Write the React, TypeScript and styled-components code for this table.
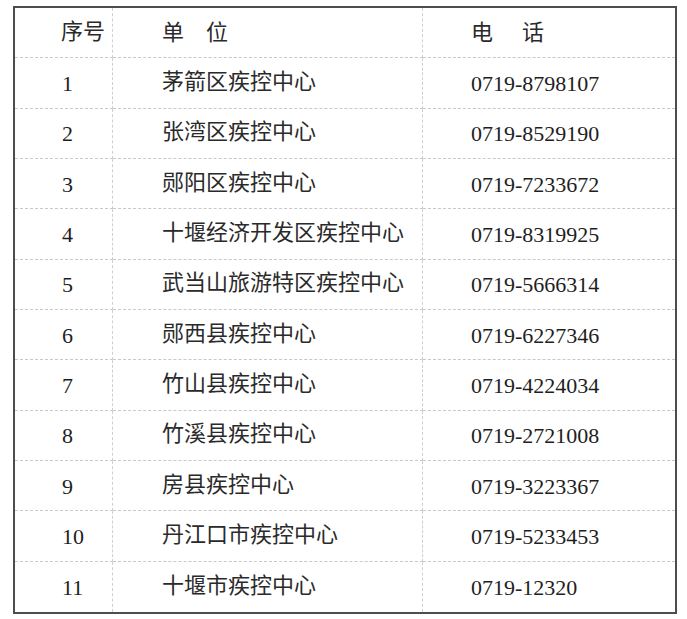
import React from "react";
import styled, { createGlobalStyle } from "styled-components";

const Global = createGlobalStyle`
  html, body {
    margin: 0;
    padding: 0;
    background: #ffffff;
  }
  body {
    font-family: "Liberation Serif", "Noto Sans CJK SC", serif;
  }
`;

const Page = styled.div`
  width: 687px;
  height: 619px;
  padding: 6px 0 0 13px;
  box-sizing: border-box;
`;

const Table = styled.div`
  width: 664px;
  box-sizing: border-box;
  border: 2px solid #4d4d4d;
  display: grid;
  grid-template-columns: 98px 310px 1fr;
  grid-auto-rows: 50.35px;
`;

const Cell = styled.div<{ $pad: number; $last?: boolean; $lastRow?: boolean }>`
  box-sizing: border-box;
  display: flex;
  align-items: center;
  padding-left: ${(p) => p.$pad}px;
  padding-top: 2px;
  border-right: ${(p) => (p.$last ? "none" : "1px dashed #cfcfcf")};
  border-bottom: ${(p) => (p.$lastRow ? "none" : "1px dashed #c8c8c8")};
  font-family: "Liberation Serif", "Noto Sans CJK SC", serif;
  font-size: 22px;
  line-height: 1;
  color: #1e1e1e;
  white-space: nowrap;
`;

const Cjk = styled.span`
  font-family: "Noto Sans CJK SC", sans-serif;
  font-size: 22px;
  line-height: 1;
  font-weight: 400;
  color: #2a2a2a;
  position: relative;
  top: -5px;
`;

const Spread = styled.span<{ $gap: number }>`
  display: flex;
  gap: ${(p) => p.$gap}px;
  font-family: "Noto Sans CJK SC", sans-serif;
  font-size: 22px;
  line-height: 1;
  color: #2a2a2a;
  position: relative;
  top: -4px;
`;

const rows: [string, string, string][] = [
  ["1", "茅箭区疾控中心", "0719-8798107"],
  ["2", "张湾区疾控中心", "0719-8529190"],
  ["3", "郧阳区疾控中心", "0719-7233672"],
  ["4", "十堰经济开发区疾控中心", "0719-8319925"],
  ["5", "武当山旅游特区疾控中心", "0719-5666314"],
  ["6", "郧西县疾控中心", "0719-6227346"],
  ["7", "竹山县疾控中心", "0719-4224034"],
  ["8", "竹溪县疾控中心", "0719-2721008"],
  ["9", "房县疾控中心", "0719-3223367"],
  ["10", "丹江口市疾控中心", "0719-5233453"],
  ["11", "十堰市疾控中心", "0719-12320"],
];

export default function App() {
  return (
    <>
      <Global />
      <Page>
        <Table>
          <Cell $pad={46}>
            <Cjk>序号</Cjk>
          </Cell>
          <Cell $pad={49}>
            <Spread $gap={22}>
              <span>单</span>
              <span>位</span>
            </Spread>
          </Cell>
          <Cell $pad={48} $last>
            <Spread $gap={29}>
              <span>电</span>
              <span>话</span>
            </Spread>
          </Cell>
          {rows.map(([n, name, tel], i) => {
            const lastRow = i === rows.length - 1;
            return (
              <React.Fragment key={n}>
                <Cell $pad={47} $lastRow={lastRow}>
                  {n}
                </Cell>
                <Cell $pad={49} $lastRow={lastRow}>
                  <Cjk>{name}</Cjk>
                </Cell>
                <Cell $pad={48} $last $lastRow={lastRow}>
                  {tel}
                </Cell>
              </React.Fragment>
            );
          })}
        </Table>
      </Page>
    </>
  );
}
